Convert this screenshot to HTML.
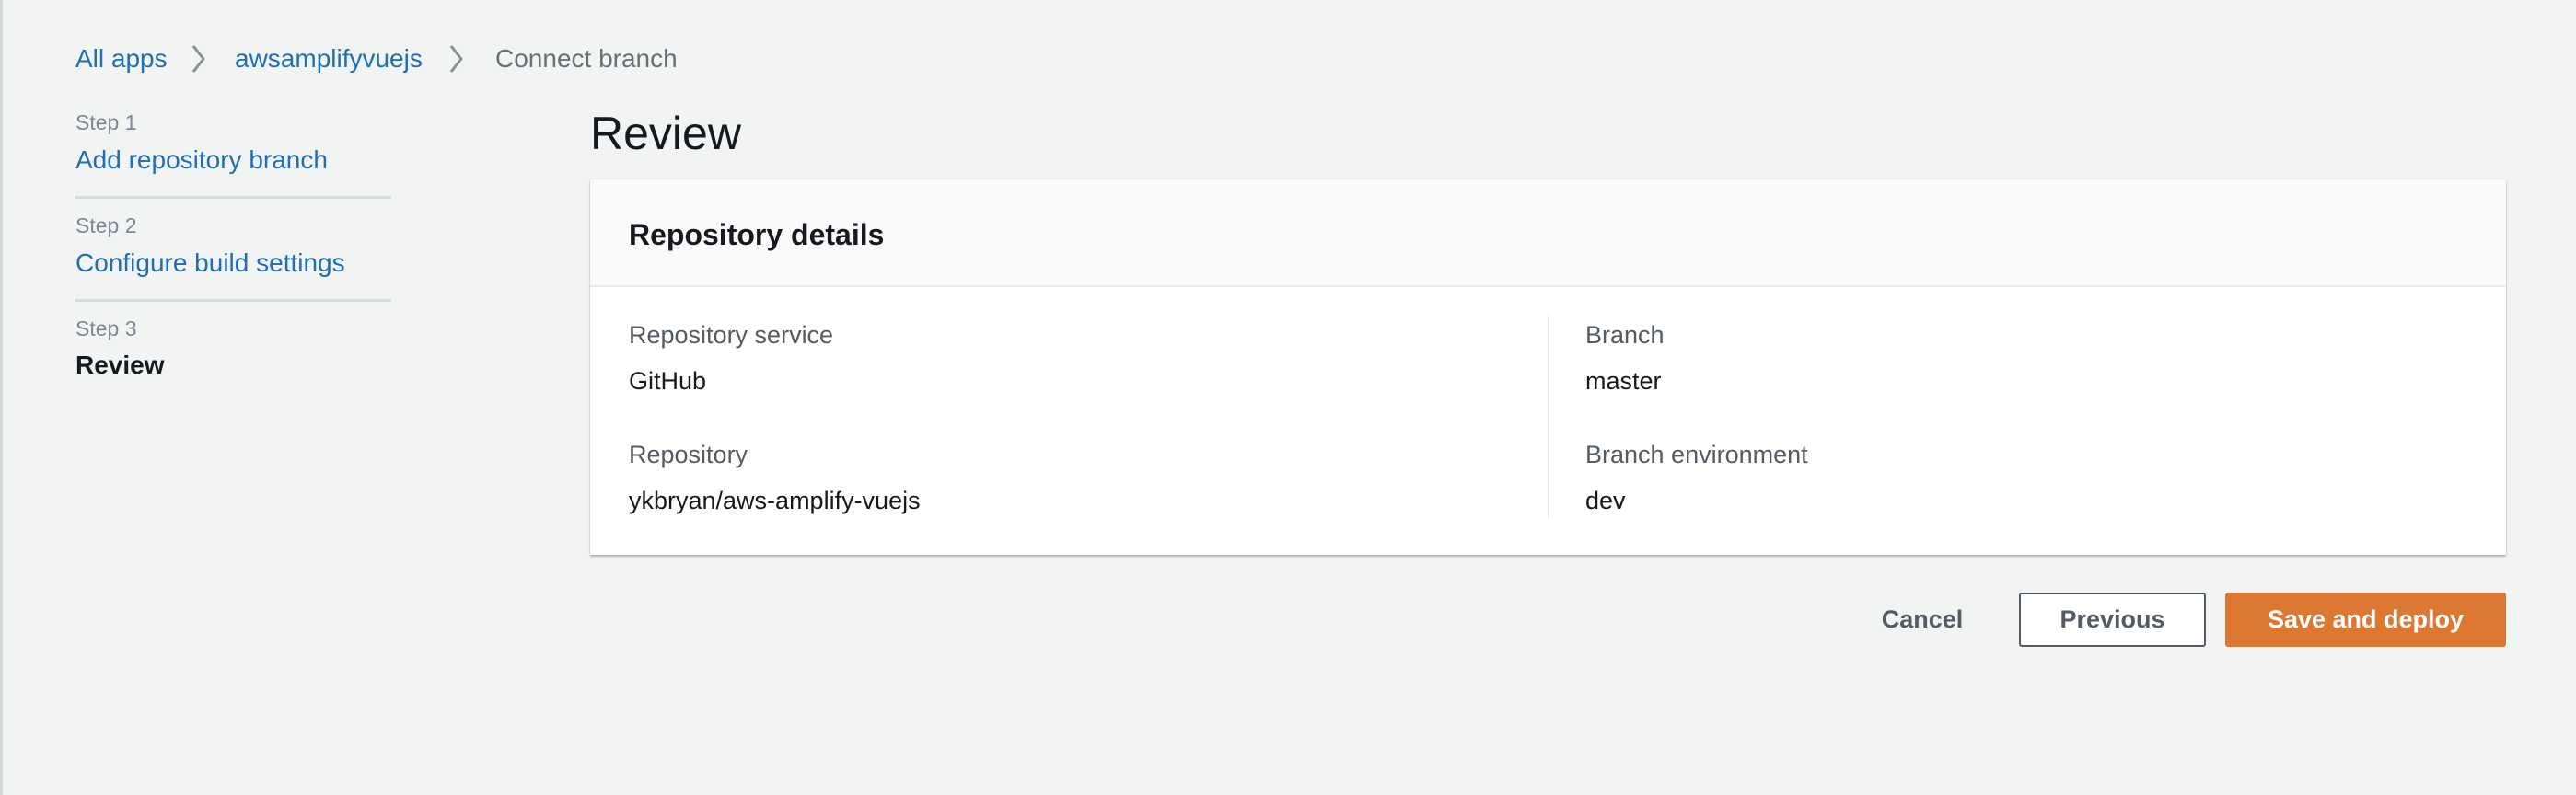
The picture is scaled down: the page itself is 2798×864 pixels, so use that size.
<!DOCTYPE html>
<html><head><style>
*{margin:0;padding:0;box-sizing:border-box}
body{width:2798px;height:864px;background:#f2f3f3;font-family:"Liberation Sans",sans-serif;position:relative;overflow:hidden}
.a{position:absolute;white-space:nowrap;line-height:1}
.link{color:#1f6fb5}
.bc{font-size:28px;top:50px}
.step{font-size:23px;color:#7d8998;left:82px}
.st{font-size:28px;left:82px}
.hr{position:absolute;left:82px;width:343px;height:3px;background:#d5dbdb}
.panel{position:absolute;left:641px;top:195px;width:2081px;height:408px;background:#fff;box-shadow:0 2px 2px rgba(0,0,0,.25),0 0 1px rgba(0,0,0,.2)}
.ph{position:absolute;left:0;top:0;width:100%;height:117px;background:#fafafa;border-bottom:2px solid #eaeded}
.lbl{font-size:27px;color:#545b64}
.val{font-size:27px;color:#16191f}
.btn{position:absolute;top:644px;height:59px;font-weight:bold;font-size:27px;display:flex;align-items:center;justify-content:center;border-radius:3px}
</style></head><body>
<div style="position:absolute;left:0;top:0;width:3px;height:864px;background:#d5d9d9"></div>
<div class="a bc link" style="left:82px">All apps</div>
<svg class="a" style="left:206px;top:48px" width="20" height="32"><path d="M4 2 L15 16 L4 30" stroke="#879596" stroke-width="3" fill="none"/></svg>
<div class="a bc link" style="left:255px">awsamplifyvuejs</div>
<svg class="a" style="left:486px;top:48px" width="20" height="32"><path d="M4 2 L15 16 L4 30" stroke="#879596" stroke-width="3" fill="none"/></svg>
<div class="a bc" style="left:538px;color:#687078">Connect branch</div>

<div class="a step" style="top:122px">Step 1</div>
<div class="a st link" style="top:160px">Add repository branch</div>
<div class="hr" style="top:213px"></div>
<div class="a step" style="top:234px">Step 2</div>
<div class="a st link" style="top:272px">Configure build settings</div>
<div class="hr" style="top:325px"></div>
<div class="a step" style="top:346px">Step 3</div>
<div class="a st" style="top:383px;font-weight:bold;color:#16191f">Review</div>

<div class="a" style="left:641px;top:120px;font-size:50px;color:#16191f">Review</div>

<div class="panel"><div class="ph"></div></div>
<div class="a" style="left:683px;top:239px;font-size:32px;font-weight:bold;color:#16191f">Repository details</div>
<div style="position:absolute;left:1681px;top:343px;width:2px;height:220px;background:#eaeded"></div>
<div class="a lbl" style="left:683px;top:351px">Repository service</div>
<div class="a val" style="left:683px;top:401px">GitHub</div>
<div class="a lbl" style="left:683px;top:481px">Repository</div>
<div class="a val" style="left:683px;top:531px">ykbryan/aws-amplify-vuejs</div>
<div class="a lbl" style="left:1722px;top:351px">Branch</div>
<div class="a val" style="left:1722px;top:401px">master</div>
<div class="a lbl" style="left:1722px;top:481px">Branch environment</div>
<div class="a val" style="left:1722px;top:531px">dev</div>

<div class="btn" style="left:2020px;width:136px;color:#545b64">Cancel</div>
<div class="btn" style="left:2193px;width:203px;border:2px solid #545b64;background:#fff;color:#545b64">Previous</div>
<div class="btn" style="left:2417px;width:305px;background:#dd7833;color:#fff">Save and deploy</div>
</body></html>
